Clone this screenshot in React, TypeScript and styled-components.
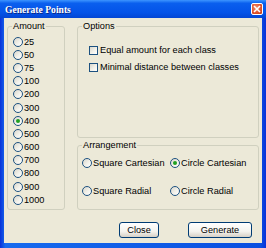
import React from "react";
import styled, { createGlobalStyle } from "styled-components";

const GlobalStyle = createGlobalStyle`
  html, body {
    margin: 0;
    padding: 0;
    background: #ffffff;
  }
  * {
    box-sizing: border-box;
  }
`;

const Window = styled.div`
  width: 266px;
  height: 248px;
  display: flex;
  flex-direction: column;
  background: linear-gradient(90deg, #0831d9 0%, #166aee 2%, #0a4fe0 98%, #0831d9 100%);
  padding: 0 4px 5px 4px;
  font-family: "Liberation Sans", Arial, sans-serif;
  font-size: 9.2px;
  color: #000;
`;

const TitleBar = styled.div`
  height: 18px;
  margin: 0 -4px;
  padding: 0 3px 0 5px;
  display: flex;
  align-items: center;
  justify-content: space-between;
  background: linear-gradient(#3d95ff 0%, #0a5fee 18%, #0453e8 70%, #0346d4 100%);
`;

const Title = styled.span`
  font-family: "Liberation Serif", "Times New Roman", serif;
  font-weight: bold;
  font-size: 9.6px;
  color: #ffffff;
  text-shadow: 1px 1px 0 #0b2a8a;
`;

const CloseBox = styled.div`
  width: 12px;
  height: 12px;
  border: 1px solid #ffffff;
  border-radius: 2px;
  background: radial-gradient(circle at 40% 35%, #f28a68 0%, #e0522c 60%, #c03a1a 100%);
  display: flex;
  align-items: center;
  justify-content: center;
`;

const Body = styled.div`
  flex: 1;
  background: #ece9d8;
  padding: 3px 3px 0 3px;
  display: flex;
  flex-direction: column;
`;

const Main = styled.div`
  display: flex;
  gap: 12px;
  height: 189px;
`;

const Group = styled.fieldset<{ $w: number; $h?: number }>`
  margin: 0;
  width: ${(p) => p.$w}px;
  height: ${(p) => (p.$h ? `${p.$h}px` : "auto")};
  border: 1px solid #d0d0bf;
  border-radius: 3px;
  padding: 0;
  min-width: 0;
`;

const Legend = styled.legend`
  padding: 0 1px;
  margin-left: 4px;
  line-height: 11px;
  font-size: 9.2px;
`;

const AmountList = styled.div`
  display: flex;
  flex-direction: column;
  padding: 3px 0 0 5px;
`;

const RadioRow = styled.label`
  display: flex;
  align-items: center;
  gap: 1px;
  height: 13.2px;
  white-space: nowrap;
`;

const RadioCircle = styled.span<{ $on?: boolean }>`
  width: 10px;
  height: 10px;
  border-radius: 50%;
  border: 1px solid #1c5180;
  background: linear-gradient(135deg, #d8d6cc 0%, #f2f1ea 55%, #ffffff 100%);
  display: flex;
  align-items: center;
  justify-content: center;
  flex: none;

  &::after {
    content: "";
    display: ${(p) => (p.$on ? "block" : "none")};
    width: 4px;
    height: 4px;
    border-radius: 50%;
    background: #21a121;
  }
`;

const RightCol = styled.div`
  display: flex;
  flex-direction: column;
  gap: 2px;
`;

const CheckList = styled.div`
  display: flex;
  flex-direction: column;
  gap: 3px;
  padding: 11px 0 0 11px;
`;

const CheckRow = styled.label`
  display: flex;
  align-items: center;
  gap: 2px;
  height: 14px;
  white-space: nowrap;
`;

const CheckBox = styled.span`
  width: 9px;
  height: 9px;
  border: 1px solid #1c5180;
  background: linear-gradient(135deg, #d8d6cc 0%, #f2f1ea 55%, #ffffff 100%);
  flex: none;
`;

const ArrangeGrid = styled.div`
  display: grid;
  grid-template-columns: 88px 88px;
  row-gap: 15px;
  padding: 5px 0 0 4px;
`;

const ButtonRow = styled.div`
  display: flex;
  justify-content: flex-end;
  gap: 29px;
  margin-top: 12px;
  padding-right: 7px;
`;

const Button = styled.button<{ $w: number }>`
  width: ${(p) => p.$w}px;
  height: 16px;
  padding: 0;
  border: 1px solid #003c74;
  border-radius: 3px;
  background: linear-gradient(#ffffff 0%, #f4f3ee 60%, #d6d0c5 100%);
  font-family: "Liberation Sans", Arial, sans-serif;
  font-size: 9.2px;
  color: #000;
`;

const amounts = [25, 50, 75, 100, 200, 300, 400, 500, 600, 700, 800, 900, 1000];

export default function App() {
  return (
    <>
      <GlobalStyle />
      <Window>
        <TitleBar>
          <Title>Generate Points</Title>
          <CloseBox>
            <svg width="8" height="8" viewBox="0 0 8 8">
              <path d="M1 1L7 7M7 1L1 7" stroke="#fff" strokeWidth="1.6" />
            </svg>
          </CloseBox>
        </TitleBar>
        <Body>
          <Main>
            <Group $w={59}>
              <Legend>Amount</Legend>
              <AmountList>
                {amounts.map((a) => (
                  <RadioRow key={a}>
                    <RadioCircle $on={a === 400} />
                    {a}
                  </RadioRow>
                ))}
              </AmountList>
            </Group>
            <RightCol>
              <Group $w={182} $h={117}>
                <Legend>Options</Legend>
                <CheckList>
                  <CheckRow>
                    <CheckBox />
                    Equal amount for each class
                  </CheckRow>
                  <CheckRow>
                    <CheckBox />
                    Minimal distance between classes
                  </CheckRow>
                </CheckList>
              </Group>
              <Group $w={182} $h={70}>
                <Legend>Arrangement</Legend>
                <ArrangeGrid>
                  <RadioRow>
                    <RadioCircle />
                    Square Cartesian
                  </RadioRow>
                  <RadioRow>
                    <RadioCircle $on />
                    Circle Cartesian
                  </RadioRow>
                  <RadioRow>
                    <RadioCircle />
                    Square Radial
                  </RadioRow>
                  <RadioRow>
                    <RadioCircle />
                    Circle Radial
                  </RadioRow>
                </ArrangeGrid>
              </Group>
            </RightCol>
          </Main>
          <ButtonRow>
            <Button $w={40}>Close</Button>
            <Button $w={64}>Generate</Button>
          </ButtonRow>
        </Body>
      </Window>
    </>
  );
}
